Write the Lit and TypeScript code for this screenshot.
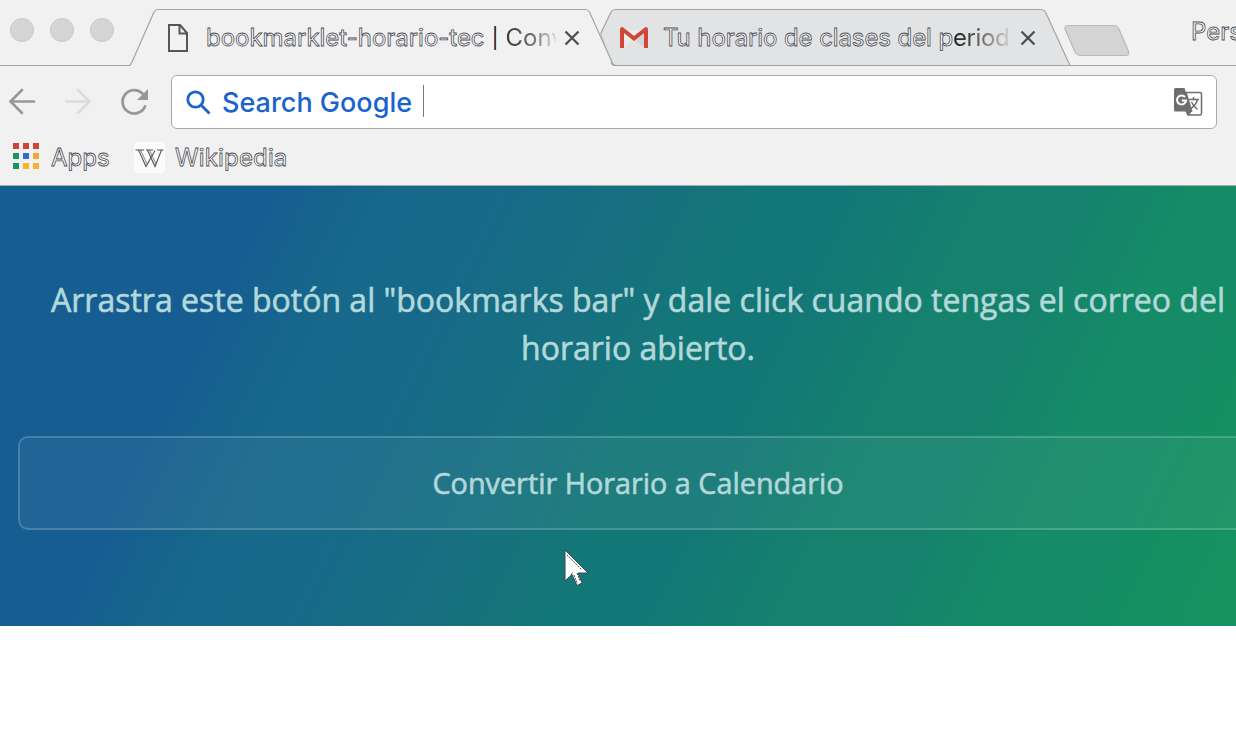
import { LitElement, html, css } from "lit";
import { customElement } from "lit/decorators.js";

const COLORS = ["#d04437", "#d04437", "#d04437", "#1b9363", "#2d6fd0", "#f0a92c", "#1b9363", "#f6b32b", "#f6b32b"];

@customElement("app-root")
export class AppRoot extends LitElement {
  static styles = css`
    :host {
      display: block;
      width: 1236px;
      height: 732px;
      overflow: hidden;
      background: #fff;
      font-family: Inter, "Liberation Sans", sans-serif;
    }
    svg { display: block; flex: none; }
    .chrome { background: #f1f1f1; height: 185px; border-bottom: 1px solid #a9a9a9; }
    .strip { display: grid; height: 66px; width: 1236px; overflow: hidden; }
    .strip > * { grid-area: 1 / 1; }
    .strip-row { display: flex; height: 66px; width: 1400px; padding-left: 10px; box-sizing: border-box; }
    .lights { display: flex; gap: 16px; width: 158px; padding-top: 18px; flex: none; }
    .light { width: 22px; height: 22px; border-radius: 50%; border: 1px solid #c9c9c9; background: #d5d5d5; }
    .tab { display: flex; align-items: center; height: 56px; padding-top: 10px; flex: none; }
    .first { width: 452px; }
    .second { width: 571px; }
    .title { overflow: hidden; white-space: pre; flex: none; font-size: 24px; line-height: 32px; }
    .t1 { width: 350px; margin-left: 17px; margin-right: 8px; }
    .t2 { width: 346px; margin-left: 15px; margin-right: 11px; }
    .hollow { color: #fff; -webkit-text-stroke: 0.8px #4c4c55; }
    .bar { color: #111; font-size: 20px; vertical-align: 1px; padding: 0 1.500px; }
    .fade { color: transparent; background: linear-gradient(90deg, #333 0, #777 50%, #f1f1f100 92%); background-clip: text; -webkit-background-clip: text; }
    .f2 { letter-spacing: -0.4px; background-image: linear-gradient(90deg, #222 0, #444 30%, #ccc 100%); }
    .w1 { letter-spacing: -0.02px; }
    .w2 { letter-spacing: -0.1px; }
    .profile { padding-top: 16px; font-size: 24px; line-height: 32px; }
    .toolbar { display: flex; height: 72px; padding-left: 8px; }
    .nav { display: flex; gap: 28px; width: 163px; padding-top: 21px; flex: none; }
    .omni { display: flex; align-items: center; width: 1046px; height: 54px; margin-top: 9px; box-sizing: border-box; border: 1px solid #aaa; border-radius: 6px; background: #fff; padding: 0 13px 0 14px; }
    .query { margin-left: 11px; font-size: 27px; font-weight: 500; color: #1b63cc; white-space: pre; width: 189px; }
    .caret { width: 1px; height: 32px; background: #777; margin-left: 12px; margin-right: auto; margin-bottom: 2px; }
    .marks { display: flex; align-items: center; height: 38px; padding-left: 13px; font-size: 24px; }
    .apps { display: grid; grid-template-columns: repeat(3, 6px); gap: 4px; flex: none; margin-bottom: 2px; }
    .dot { width: 6px; height: 6px; }
    .l-apps { width: 59px; margin: 0 24px 0 12px; flex: none; }
    .l-wiki { letter-spacing: 0.15px; }
    .wiki { margin-right: 10px; }
    .hero {
      height: 440px;
      width: 1276px;
      box-sizing: border-box;
      padding: 90px 18px 0;
      background: linear-gradient(116deg, #165d92 18%, #17688a 26%, #17698a 32%, #177080 43%, #147777 51%, #147777 57%, #15826e 67%, #15826e 73%, #158b67 80%, #158c66 86%, #16925f 95%);
      font-family: "Open Sans", sans-serif;
      color: #b2d8da;
      text-align: center;
    }
    .lead { margin: 0; font-size: 32px; line-height: 48px; white-space: nowrap; -webkit-text-stroke: 0.6px; }
    .btn { margin-top: 64px; height: 94px; box-sizing: border-box; border: 2px solid rgba(255, 255, 255, 0.22); border-radius: 10px; background: rgba(255, 255, 255, 0.05); background-clip: padding-box; font-size: 28.8px; line-height: 90px; -webkit-text-stroke: 0.6px; }
    .cursor { position: absolute; left: 560px; top: 546px; }
  `;

  render() {
    return html`
      <div class="chrome">
        <div class="strip">
          <svg width="1236" height="66" fill="none" stroke="#a3a3a3" stroke-width="1.2">
            <path d="M600.5 34L611 12Q612.500 9.500 615 9.500H1041Q1044 9.500 1045.500 12L1070 65.500H614Q612 65 611 62Z" fill="#e1e3e4" />
            <path d="M589.500 12L600.500 34L612 62L600 64Z" fill="#f1f1f1" stroke="none" />
            <path d="M0 65.500H129Q131 65 132 62L154 12Q155.500 9.500 158 9.500H585Q588 9.500 589.500 12L612 62Q613 65.500 616 65.500" />
            <path d="M1070 65.500H1236" />
            <path d="M1069 25.500H1114Q1117 25.500 1118.500 28L1128 50Q1130 55.500 1126 55.500H1081Q1077 55.500 1075 52L1065 29Q1064 25.500 1069 25.500Z" fill="#d4d4d4" stroke="#b9b9b9" />
          </svg>
          <div class="strip-row">
            <div class="lights"><div class="light"></div><div class="light"></div><div class="light"></div></div>
            <div class="tab first">
              <svg width="21" height="28" fill="none" stroke="#555659" stroke-width="2"><path d="M1 1H12L19 9V27H1Z" /><path d="M11.500 1V9.500H19" /></svg>
              <div class="title t1"><span class="hollow w1">bookmarklet-horario-tec</span><span class="bar"> | </span><span class="fade">Conv</span></div>
              <svg width="16" height="16" stroke="#4e4f52" stroke-width="2.300"><path d="M1.500 1.500L14.500 14.500M14.500 1.500L1.500 14.500" /></svg>
            </div>
            <div class="tab second">
              <svg width="28" height="22"><path d="M3 3H25V21H3Z" fill="#ebebeb" /><path d="M3 21L14 11L25 21Z" fill="#e2e2e2" /><path d="M14 12L25 4V21Z" fill="#d5d5d5" /><path d="M0 2.500Q0 0 2.500 0L14 9L25.500 0Q28 0 28 2.500V21H24V6L14 14L4 6V21H0Z" fill="#d04638" /></svg>
              <div class="title t2"><span class="hollow w2">Tu horario de clases del p</span><span class="fade f2">eriod</span></div>
              <svg width="16" height="16" stroke="#4e4f52" stroke-width="2.300"><path d="M1.500 1.500L14.500 14.500M14.500 1.500L1.500 14.500" /></svg>
            </div>
            <div class="profile hollow">Pers</div>
          </div>
        </div>
        <div class="toolbar">
          <div class="nav">
            <svg width="28" height="30" fill="none" stroke="#979797" stroke-width="2.600" stroke-linecap="round"><path d="M26 14.500H3M14 3L2.500 14.500L14 26" /></svg>
            <svg width="28" height="30" fill="none" stroke="#dadcde" stroke-width="2.600" stroke-linecap="round"><path d="M2 14.500H25M14 3L25.500 14.500L14 26" /></svg>
            <svg width="28" height="30" fill="none" stroke="#979797" stroke-width="2.800" stroke-linecap="round"><path d="M25 19.500A11.700 11.700 0 1 1 22.500 6.500" /><path d="M28 2V13H17Z" fill="#979797" stroke="none" /></svg>
          </div>
          <div class="omni">
            <svg width="25" height="25" fill="none" stroke="#1b63cc" stroke-width="2.800"><circle cx="9.500" cy="9.500" r="7.700" /><path d="M15 15L23.500 23.500" /></svg>
            <div class="query">Search Google</div>
            <div class="caret"></div>
            <svg width="30" height="30"><path d="M13 5.500H27Q28.500 5.500 28.500 7V26.500Q28.500 28 27 28H15L13 23.500L18.500 24Z" fill="#fff" stroke="#6e6e6e" stroke-width="1.500" /><path d="M2.500 1H11.500L19 24.500H2.500Q1 24.500 1 23V3Q1 1 2.500 1Z" fill="#6e6e6e" /><path d="M13.500 24H19L15.500 28.500Z" fill="#6e6e6e" /><path d="M12 10A4.500 4.500 0 1 0 13 13.500H8.800" stroke="#fff" stroke-width="2" fill="none" /><path d="M16 12.500H26M20.500 10V12.500M24.500 12.500Q23 18 18 21.500M18.500 15Q20 19 24.500 22.500" stroke="#6e6e6e" stroke-width="1.500" fill="none" /></svg>
          </div>
        </div>
        <div class="marks">
          <div class="apps">${COLORS.map((c) => html`<div class="dot" style="background:${c}"></div>`)}</div>
          <div class="l-apps hollow">Apps</div>
          <svg class="wiki" width="31" height="31"><rect width="31" height="31" rx="4" fill="#fff" opacity=".7" /><g fill="none" stroke="#555"><path d="M1.500 8H10M12 8H19M23 8H29.500" stroke-width="1.100" /><path d="M4.500 8L12 24.500L21 8.500M13.500 8L21 24.500L27.500 8" stroke-width="1.100" /><path d="M6.500 8L13 22M15.500 8L22 22" stroke-width=".7" /></g></svg>
          <div class="hollow l-wiki">Wikipedia</div>
        </div>
      </div>
      <div class="hero">
        <p class="lead">Arrastra este botón al "bookmarks bar" y dale click cuando tengas el correo del<br />horario abierto.</p>
        <div class="btn">Convertir Horario a Calendario</div>
      </div>
      <svg class="cursor" width="32" height="42"><path d="M5 4V35L12 28.500L17 39.500L22 37L18 27H28Z" fill="#fff" stroke="#334b5c" stroke-width="1" /><path d="M7 9L22 24M11 29L13 26M14 29L17 37M17 27L20 35" stroke="#444" stroke-dasharray="2 1" fill="none" /></svg>
    `;
  }
}
